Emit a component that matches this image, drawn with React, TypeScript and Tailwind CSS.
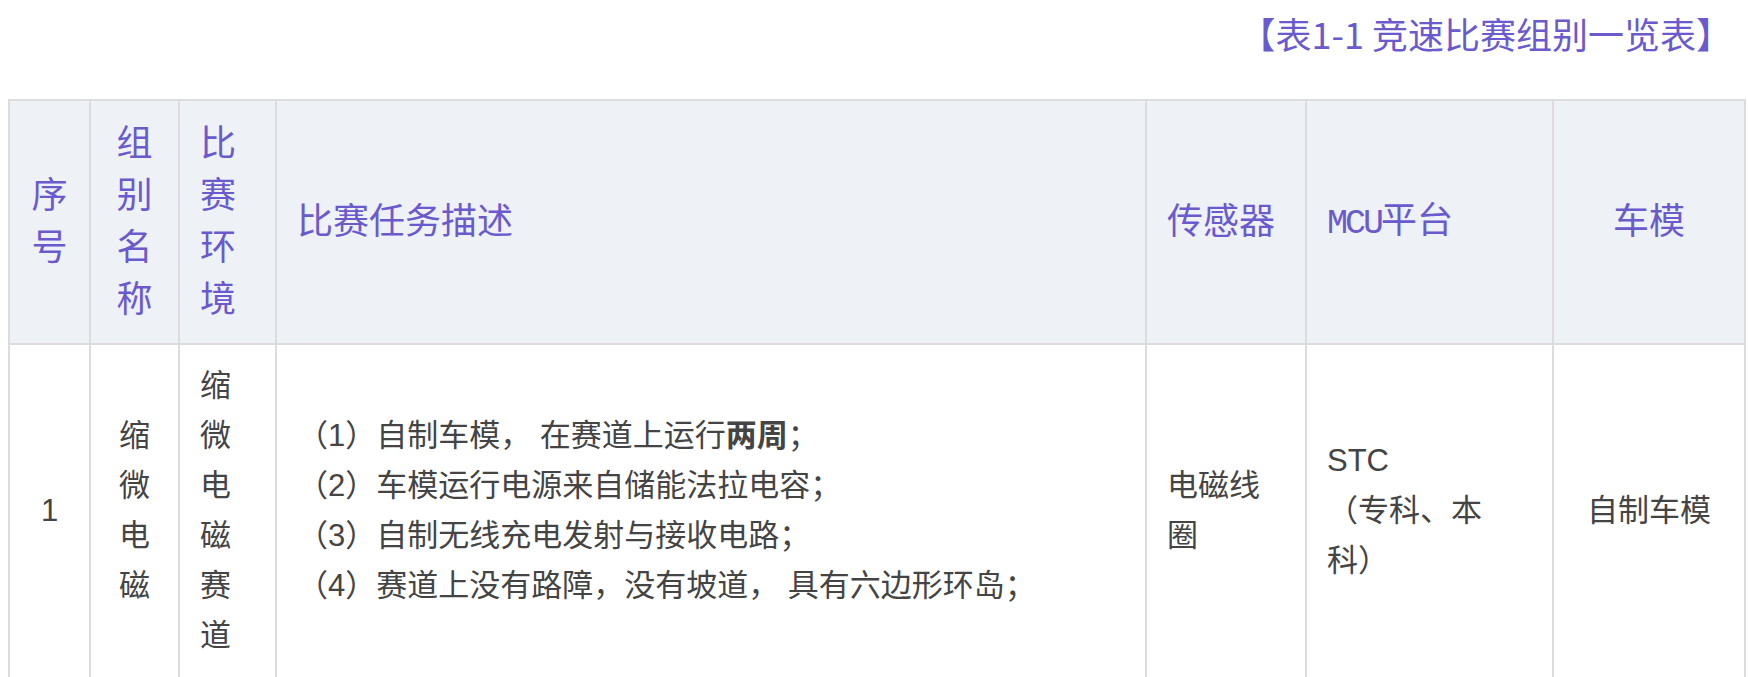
const headCell =
  "border-2 border-[#dcdcdc] bg-[#eef1f5] px-5 py-[17px] align-middle text-[36px] leading-[52px] font-normal text-[#6a5acd] font-['Liberation_Serif','Noto_Sans_CJK_SC',serif]";
const bodyCell =
  "border-2 border-[#dcdcdc] bg-white px-5 py-4 align-middle text-[31px] leading-[50px] text-[#444444] font-['Liberation_Sans','Noto_Sans_CJK_SC',sans-serif]";

const tasks = [
  <>（1）自制车模， 在赛道上运行<b className="font-bold">两周</b>；</>,
  <>（2）车模运行电源来自储能法拉电容；</>,
  <>（3）自制无线充电发射与接收电路；</>,
  <>（4）赛道上没有路障，没有坡道， 具有六边形环岛；</>,
];

export default function App() {
  return (
    <div className="w-[1748px] h-[677px] overflow-hidden bg-white pl-[8px]">
      <div className="h-[66px] pr-[16px] text-right text-[36px] leading-[66px] text-[#6a5acd] font-['Noto_Sans_CJK_SC',sans-serif]">
        【表1-1 竞速比赛组别一览表】
      </div>

      <table className="mt-[33px] w-[1738px] table-fixed border-collapse">
        <colgroup>
          <col className="w-[81px]" />
          <col className="w-[89px]" />
          <col className="w-[97px]" />
          <col className="w-[870px]" />
          <col className="w-[160px]" />
          <col className="w-[247px]" />
          <col className="w-[192px]" />
        </colgroup>
        <thead>
          <tr>
            <th className={headCell + " text-center"}>序号</th>
            <th className={headCell + " text-center"}>组别名称</th>
            <th className={headCell + " text-left"}>比赛环境</th>
            <th className={headCell + " text-left"}>比赛任务描述</th>
            <th className={headCell + " text-left"}>传感器</th>
            <th className={headCell + " text-left"}>
              <span className="font-['Liberation_Mono',monospace] text-[35px] tracking-[-3px]">MCU</span>平台
            </th>
            <th className={headCell + " text-center"}>车模</th>
          </tr>
        </thead>
        <tbody>
          <tr>
            <td className={bodyCell + " text-center"}>1</td>
            <td className={bodyCell + " text-center"}>缩微电磁</td>
            <td className={bodyCell + " text-left"}>缩微电磁赛道</td>
            <td className={bodyCell + " text-left"}>
              {tasks.map((t, i) => (
                <div key={i}>{t}</div>
              ))}
            </td>
            <td className={bodyCell + " text-left"}>电磁线圈</td>
            <td className={bodyCell + " text-left"}>
              STC
              <br />
              （专科、本
              <br />
              科）
            </td>
            <td className={bodyCell + " text-center"}>自制车模</td>
          </tr>
        </tbody>
      </table>
    </div>
  );
}
